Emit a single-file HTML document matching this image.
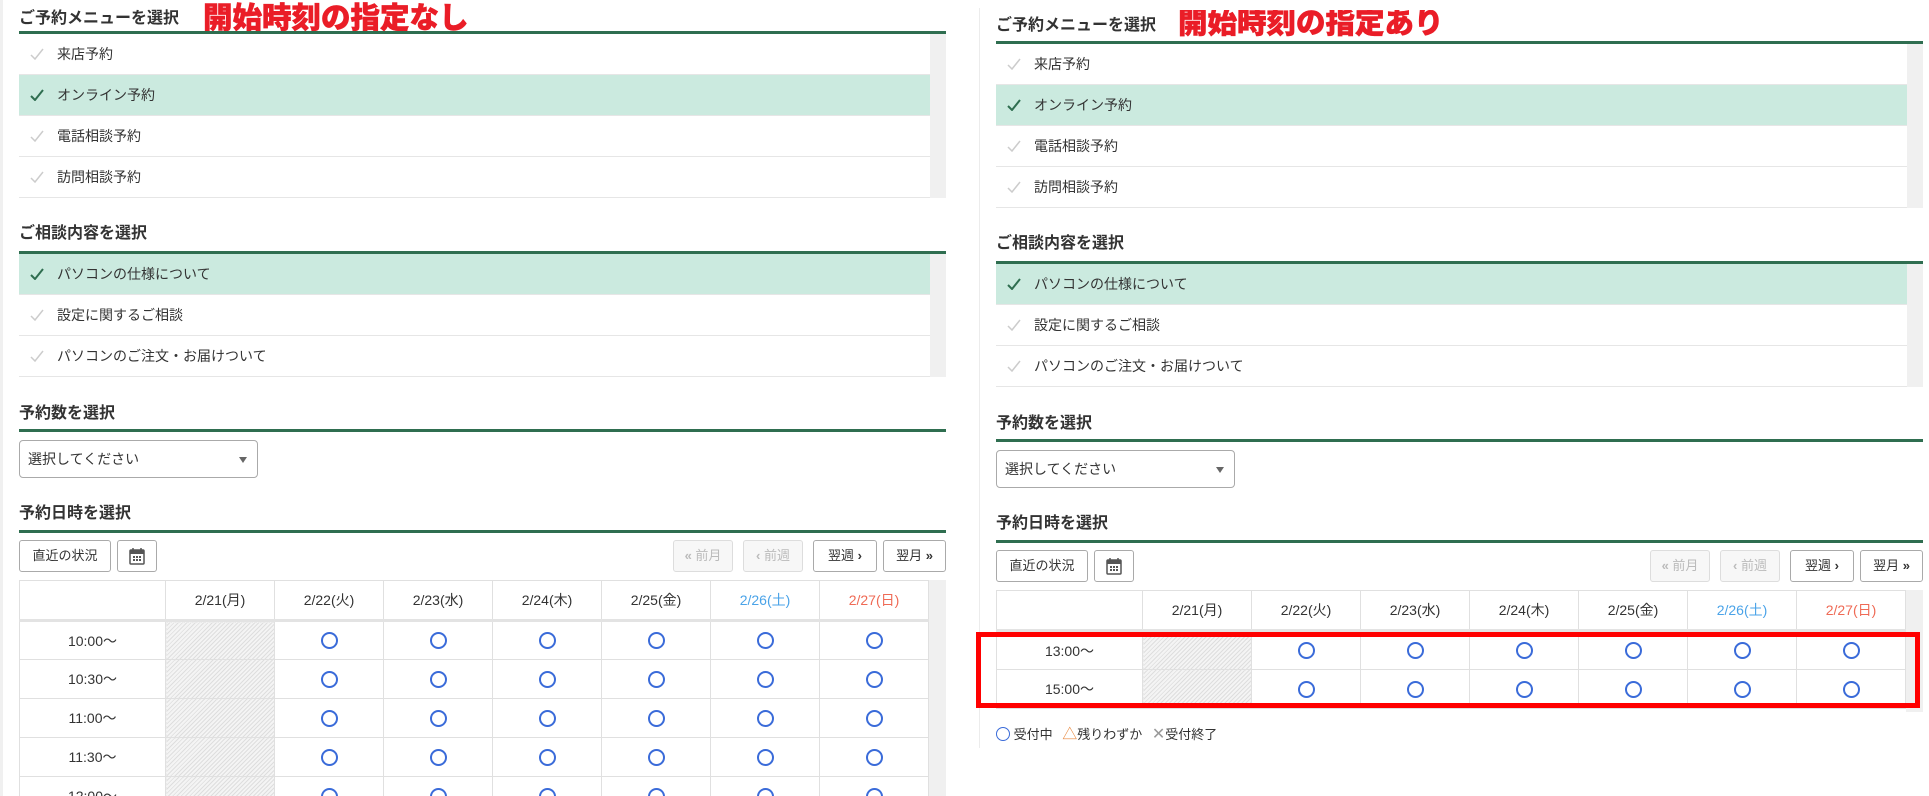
<!DOCTYPE html>
<html style="width:1929px;height:796px;overflow:hidden"><head><meta charset="utf-8"><style>
*{box-sizing:border-box;margin:0;padding:0}
body{width:1929px;height:796px;overflow:hidden;background:#fff;position:relative;font-family:"Liberation Sans","Noto Sans CJK JP",sans-serif;color:#333}
.p{position:absolute;width:927px;height:796px;overflow:hidden}
.a{position:absolute}
.h{position:absolute;left:0;font-size:16px;font-weight:bold;color:#333;line-height:20px}
.ln{position:absolute;left:0;width:927px;height:3px;background:#2f6e50}
.list{position:absolute;left:0;width:927px}
.row{height:41px;border-bottom:1px solid #e6e6e6;position:relative;width:911px;font-size:14px;line-height:40px;padding-left:38px}
.row.sel{background:#cbeadf}
.row svg{position:absolute;left:11px;top:14px}
.strip{position:absolute;right:0;top:0;width:16px;height:100%;background:#f0f0f0}
.sel0{position:absolute;left:0;width:239px;height:38px;border:1px solid #aaa;border-radius:4px;font-size:14px;line-height:36px;padding-left:8px}
.sel0:after{content:"";position:absolute;right:10px;top:16px;border:4px solid transparent;border-top:6px solid #666;border-bottom:0}
.btn{position:absolute;height:32px;border:1px solid #aaa;border-radius:3px;font-size:13px;line-height:30px;text-align:center;background:#fff;color:#333}
.btn.dis{border-color:#ddd;color:#bbb;background:#f7f7f7}
.btn b{font-weight:bold}
table{position:absolute;left:0;border-collapse:collapse;font-size:14px;table-layout:fixed}
td,th{border:1px solid #e0e0e0;text-align:center;font-weight:normal;height:39px}
th{height:40px;border-bottom:3px solid #e3e3e3}
.hat{background:repeating-linear-gradient(135deg,#f4f4f4 0 2px,#dedede 2px 3px)}
.o{display:inline-block;width:17px;height:17px;border:2px solid #3a6bd9;border-radius:50%;vertical-align:middle}
.sat{color:#4aa3e8}.sun{color:#ef6a55}
.red{position:absolute;font-size:29.5px;font-weight:900;color:#ea1d27;line-height:34px;white-space:nowrap;-webkit-text-stroke:0.6px #ea1d27}
</style></head><body>
<div class="a" style="left:0;top:0;width:3px;height:796px;background:#f0f0f0"></div>
<div class="a" style="left:979px;top:8px;width:1px;height:740px;background:#ececec"></div>

<!-- LEFT PANEL -->
<div class="p" style="left:19px;top:0">
<div class="h" style="top:9px">ご予約メニューを選択</div>
<div class="red" style="left:184px;top:2px">開始時刻の指定なし</div>
<div class="ln" style="top:31px"></div>
<div class="list" style="top:34px;height:164px"><div class="strip"></div>
<div class="row"><svg width="14" height="12"><path d="M1 7l4 4 8-10" stroke="#ccc" stroke-width="1.5" fill="none"/></svg>来店予約</div>
<div class="row sel"><svg width="14" height="12"><path d="M1 7l4 4 8-10" stroke="#2f6e50" stroke-width="2" fill="none"/></svg>オンライン予約</div>
<div class="row"><svg width="14" height="12"><path d="M1 7l4 4 8-10" stroke="#ccc" stroke-width="1.5" fill="none"/></svg>電話相談予約</div>
<div class="row"><svg width="14" height="12"><path d="M1 7l4 4 8-10" stroke="#ccc" stroke-width="1.5" fill="none"/></svg>訪問相談予約</div>
</div>
<div class="h" style="top:224px">ご相談内容を選択</div>
<div class="ln" style="top:251px"></div>
<div class="list" style="top:254px;height:123px"><div class="strip"></div>
<div class="row sel"><svg width="14" height="12"><path d="M1 7l4 4 8-10" stroke="#2f6e50" stroke-width="2" fill="none"/></svg>パソコンの仕様について</div>
<div class="row"><svg width="14" height="12"><path d="M1 7l4 4 8-10" stroke="#ccc" stroke-width="1.5" fill="none"/></svg>設定に関するご相談</div>
<div class="row"><svg width="14" height="12"><path d="M1 7l4 4 8-10" stroke="#ccc" stroke-width="1.5" fill="none"/></svg>パソコンのご注文・お届けついて</div>
</div>
<div class="h" style="top:404px">予約数を選択</div>
<div class="ln" style="top:429px"></div>
<div class="sel0" style="top:440px">選択してください</div>
<div class="h" style="top:504px">予約日時を選択</div>
<div class="ln" style="top:530px"></div>
<div class="btn" style="left:0;top:540px;width:92px">直近の状況</div>
<div class="btn" style="left:98px;top:540px;width:40px"><svg width="16" height="18" style="margin-top:6px"><rect x="1" y="3" width="14" height="14" rx="1" fill="none" stroke="#555" stroke-width="1.5"/><rect x="1" y="3" width="14" height="4" fill="#555"/><path d="M4 1v4M12 1v4" stroke="#555" stroke-width="1.5"/><g fill="#555"><rect x="4" y="9" width="2" height="2"/><rect x="7" y="9" width="2" height="2"/><rect x="10" y="9" width="2" height="2"/><rect x="4" y="12" width="2" height="2"/><rect x="7" y="12" width="2" height="2"/><rect x="10" y="12" width="2" height="2"/></g></svg></div>
<div class="btn dis" style="left:654px;top:540px;width:60px"><b>«</b> 前月</div>
<div class="btn dis" style="left:724px;top:540px;width:60px"><b>‹</b> 前週</div>
<div class="btn" style="left:794px;top:540px;width:64px">翌週 <b>›</b></div>
<div class="btn" style="left:864px;top:540px;width:63px">翌月 <b>»</b></div>
<div class="a" style="left:910px;top:580px;width:17px;height:300px;background:#f0f0f0"></div>
<table style="top:580px;width:910px">
<colgroup><col style="width:146px"><col style="width:109px"><col style="width:109px"><col style="width:109px"><col style="width:109px"><col style="width:109px"><col style="width:109px"><col style="width:109px"></colgroup>
<tr><th></th><th>2/21(月)</th><th>2/22(火)</th><th>2/23(水)</th><th>2/24(木)</th><th>2/25(金)</th><th class="sat">2/26(土)</th><th class="sun">2/27(日)</th></tr>
<tr><td>10:00〜</td><td class="hat"></td><td><i class="o"></i></td><td><i class="o"></i></td><td><i class="o"></i></td><td><i class="o"></i></td><td><i class="o"></i></td><td><i class="o"></i></td></tr>
<tr><td>10:30〜</td><td class="hat"></td><td><i class="o"></i></td><td><i class="o"></i></td><td><i class="o"></i></td><td><i class="o"></i></td><td><i class="o"></i></td><td><i class="o"></i></td></tr>
<tr><td>11:00〜</td><td class="hat"></td><td><i class="o"></i></td><td><i class="o"></i></td><td><i class="o"></i></td><td><i class="o"></i></td><td><i class="o"></i></td><td><i class="o"></i></td></tr>
<tr><td>11:30〜</td><td class="hat"></td><td><i class="o"></i></td><td><i class="o"></i></td><td><i class="o"></i></td><td><i class="o"></i></td><td><i class="o"></i></td><td><i class="o"></i></td></tr>
<tr><td>12:00〜</td><td class="hat"></td><td><i class="o"></i></td><td><i class="o"></i></td><td><i class="o"></i></td><td><i class="o"></i></td><td><i class="o"></i></td><td><i class="o"></i></td></tr>
</table>
</div>

<!-- RIGHT PANEL -->
<div class="p" style="left:996px;top:10px">
<div class="h" style="top:6px">ご予約メニューを選択</div>
<div class="red" style="left:182px;top:-3px">開始時刻の指定あり</div>
<div class="ln" style="top:31px"></div>
<div class="list" style="top:34px;height:164px"><div class="strip"></div>
<div class="row"><svg width="14" height="12"><path d="M1 7l4 4 8-10" stroke="#ccc" stroke-width="1.5" fill="none"/></svg>来店予約</div>
<div class="row sel"><svg width="14" height="12"><path d="M1 7l4 4 8-10" stroke="#2f6e50" stroke-width="2" fill="none"/></svg>オンライン予約</div>
<div class="row"><svg width="14" height="12"><path d="M1 7l4 4 8-10" stroke="#ccc" stroke-width="1.5" fill="none"/></svg>電話相談予約</div>
<div class="row"><svg width="14" height="12"><path d="M1 7l4 4 8-10" stroke="#ccc" stroke-width="1.5" fill="none"/></svg>訪問相談予約</div>
</div>
<div class="h" style="top:224px">ご相談内容を選択</div>
<div class="ln" style="top:251px"></div>
<div class="list" style="top:254px;height:123px"><div class="strip"></div>
<div class="row sel"><svg width="14" height="12"><path d="M1 7l4 4 8-10" stroke="#2f6e50" stroke-width="2" fill="none"/></svg>パソコンの仕様について</div>
<div class="row"><svg width="14" height="12"><path d="M1 7l4 4 8-10" stroke="#ccc" stroke-width="1.5" fill="none"/></svg>設定に関するご相談</div>
<div class="row"><svg width="14" height="12"><path d="M1 7l4 4 8-10" stroke="#ccc" stroke-width="1.5" fill="none"/></svg>パソコンのご注文・お届けついて</div>
</div>
<div class="h" style="top:404px">予約数を選択</div>
<div class="ln" style="top:429px"></div>
<div class="sel0" style="top:440px">選択してください</div>
<div class="h" style="top:504px">予約日時を選択</div>
<div class="ln" style="top:530px"></div>
<div class="btn" style="left:0;top:540px;width:92px">直近の状況</div>
<div class="btn" style="left:98px;top:540px;width:40px"><svg width="16" height="18" style="margin-top:6px"><rect x="1" y="3" width="14" height="14" rx="1" fill="none" stroke="#555" stroke-width="1.5"/><rect x="1" y="3" width="14" height="4" fill="#555"/><path d="M4 1v4M12 1v4" stroke="#555" stroke-width="1.5"/><g fill="#555"><rect x="4" y="9" width="2" height="2"/><rect x="7" y="9" width="2" height="2"/><rect x="10" y="9" width="2" height="2"/><rect x="4" y="12" width="2" height="2"/><rect x="7" y="12" width="2" height="2"/><rect x="10" y="12" width="2" height="2"/></g></svg></div>
<div class="btn dis" style="left:654px;top:540px;width:60px"><b>«</b> 前月</div>
<div class="btn dis" style="left:724px;top:540px;width:60px"><b>‹</b> 前週</div>
<div class="btn" style="left:794px;top:540px;width:64px">翌週 <b>›</b></div>
<div class="btn" style="left:864px;top:540px;width:63px">翌月 <b>»</b></div>
<div class="a" style="left:910px;top:580px;width:17px;height:122px;background:#f0f0f0"></div>
<table style="top:580px;width:910px">
<colgroup><col style="width:146px"><col style="width:109px"><col style="width:109px"><col style="width:109px"><col style="width:109px"><col style="width:109px"><col style="width:109px"><col style="width:109px"></colgroup>
<tr><th></th><th>2/21(月)</th><th>2/22(火)</th><th>2/23(水)</th><th>2/24(木)</th><th>2/25(金)</th><th class="sat">2/26(土)</th><th class="sun">2/27(日)</th></tr>
<tr><td>13:00〜</td><td class="hat"></td><td><i class="o"></i></td><td><i class="o"></i></td><td><i class="o"></i></td><td><i class="o"></i></td><td><i class="o"></i></td><td><i class="o"></i></td></tr>
<tr><td>15:00〜</td><td class="hat"></td><td><i class="o"></i></td><td><i class="o"></i></td><td><i class="o"></i></td><td><i class="o"></i></td><td><i class="o"></i></td><td><i class="o"></i></td></tr>
</table>
<div class="a" style="left:0;top:715px;font-size:13px;line-height:20px;white-space:nowrap">
<i class="o" style="width:14px;height:14px;border-width:1.5px;margin-top:-3px"></i> 受付中
<span style="color:#e8863a;font-size:15px;margin-left:6px">△</span>残りわずか
<span style="color:#999;font-size:16px;margin-left:6px">✕</span>受付終了
</div>
</div>

<div class="a" style="left:976px;top:632px;width:944px;height:76px;border:5px solid #ff0000"></div>
</body></html>
